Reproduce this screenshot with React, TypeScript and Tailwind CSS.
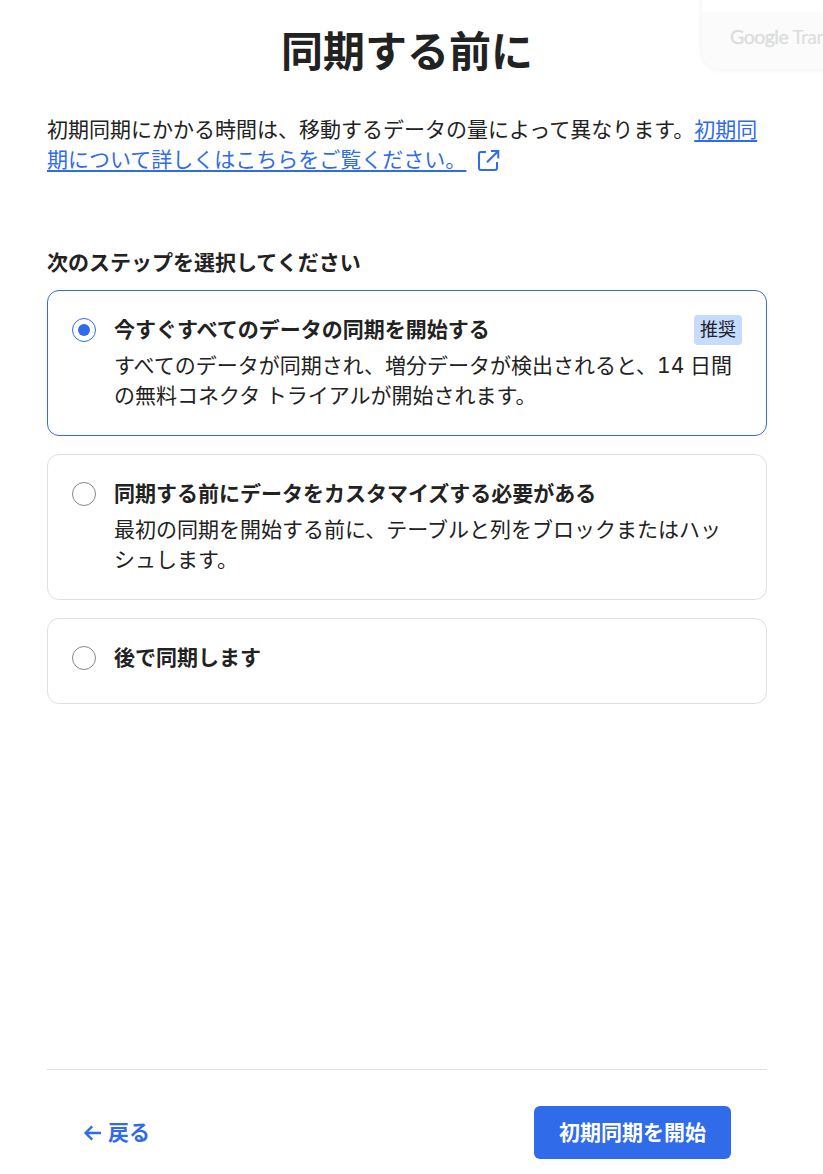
import React, { useState } from "react";

const options = [
  {
    id: "now",
    title: "今すぐすべてのデータの同期を開始する",
    description:
      "すべてのデータが同期され、増分データが検出されると、14 日間の無料コネクタ トライアルが開始されます。",
    recommended: true,
  },
  {
    id: "customize",
    title: "同期する前にデータをカスタマイズする必要がある",
    description: "最初の同期を開始する前に、テーブルと列をブロックまたはハッシュします。",
  },
  { id: "later", title: "後で同期します" },
];

type OptionCardProps = {
  title: string;
  description?: string;
  recommended?: boolean;
  selected: boolean;
  onSelect: () => void;
};

const OptionCard = ({ title, description, recommended, selected, onSelect }: OptionCardProps) => (
  <div
    role="radio"
    aria-checked={selected}
    onClick={onSelect}
    className={`flex cursor-pointer rounded-xl border p-6 ${
      selected ? "border-[#306bea]" : "border-[#dfdfdf]"
    }`}
  >
    <span
      className={`mt-[3px] flex h-6 w-6 shrink-0 items-center justify-center rounded-full border ${
        selected ? "border-[#306bea]" : "border-[#858585]"
      }`}
    >
      {selected && <span className="h-3 w-3 rounded-full bg-[#306bea]" />}
    </span>
    <div className="ml-[18px] min-w-0 flex-1">
      <div className="mb-1.5 flex items-center justify-between">
        <h3 className="font-bold">{title}</h3>
        {recommended && (
          <span className="h-[30px] rounded bg-[#c5dbff] px-1.5 text-[18px] leading-[30px]">推奨</span>
        )}
      </div>
      {description && <p className="tabular-nums">{description}</p>}
    </div>
  </div>
);

const ExternalLinkIcon = () => (
  <svg
    className="ml-3 inline-block h-[22px] w-[22px] align-[-5px]"
    viewBox="0 0 22 22"
    fill="none"
    stroke="currentColor"
    strokeWidth="2"
  >
    <path d="M8 2H3a2 2 0 0 0-2 2v14a2 2 0 0 0 2 2h14a2 2 0 0 0 2-2v-6" />
    <path d="M13 1h7.3v7.5M20.3 1L9 12.3" />
  </svg>
);

const App = () => {
  const [selected, setSelected] = useState("now");

  return (
    <div
      lang="ja"
      className="relative flex h-[1174px] w-[823px] flex-col overflow-hidden bg-white pr-14 pl-[47px] font-['Inter','Noto_Sans_CJK_JP',sans-serif] text-[21px] leading-[30px] text-[#222]"
    >
      {/* Translate popup */}
      <div className="absolute -top-5 left-[702px] h-[89px] w-[200px] overflow-hidden rounded-[18px] bg-white shadow-[0_0_4px_2px_#f5f5f5]">
        <div className="mt-8 flex h-[57px] gap-1 bg-[#fbfbfb] pl-7 font-['Lato',sans-serif] text-[19.5px] leading-[50px] whitespace-nowrap text-[#dcdddd]">
          <span className="tracking-[-0.5px] [-webkit-text-stroke:0.4px]">Google</span>
          <span className="tracking-[-0.6px]">Translate</span>
        </div>
      </div>

      <h1 className="mt-[22px] text-center text-[42px] leading-[60px] font-bold">同期する前に</h1>

      <p className="mt-[33px]">
        初期同期にかかる時間は、移動するデータの量によって異なります。
        <a href="#" className="text-[#306bea]">
          <span className="underline decoration-2 underline-offset-3 [text-decoration-skip-ink:none]">
            初期同期について詳しくはこちらをご覧ください。
          </span>
          <ExternalLinkIcon />
        </a>
      </p>

      <h2 className="mt-[73px] font-bold">次のステップを選択してください</h2>

      <div role="radiogroup" className="mt-3 flex flex-col gap-[18px]">
        {options.map((option) => (
          <OptionCard
            key={option.id}
            title={option.title}
            description={option.description}
            recommended={option.recommended}
            selected={selected === option.id}
            onSelect={() => setSelected(option.id)}
          />
        ))}
      </div>

      {/* Footer */}
      <footer className="mt-auto flex h-[105px] items-center justify-between border-t border-[#dfdfdf] px-9 pt-[21px] font-bold">
        <button className="flex items-center gap-[7px] text-[#306bea]">
          <svg className="h-[18px] w-[18px]" viewBox="0 0 18 18" fill="none" stroke="currentColor" strokeWidth="2.4">
            <path d="M18 9H2.5M9.2 2.4L2.6 9l6.6 6.6" />
          </svg>
          戻る
        </button>
        <button className="h-[53px] rounded-md bg-[#306bea] px-[25px] text-white">初期同期を開始</button>
      </footer>
    </div>
  );
};

export default App;
